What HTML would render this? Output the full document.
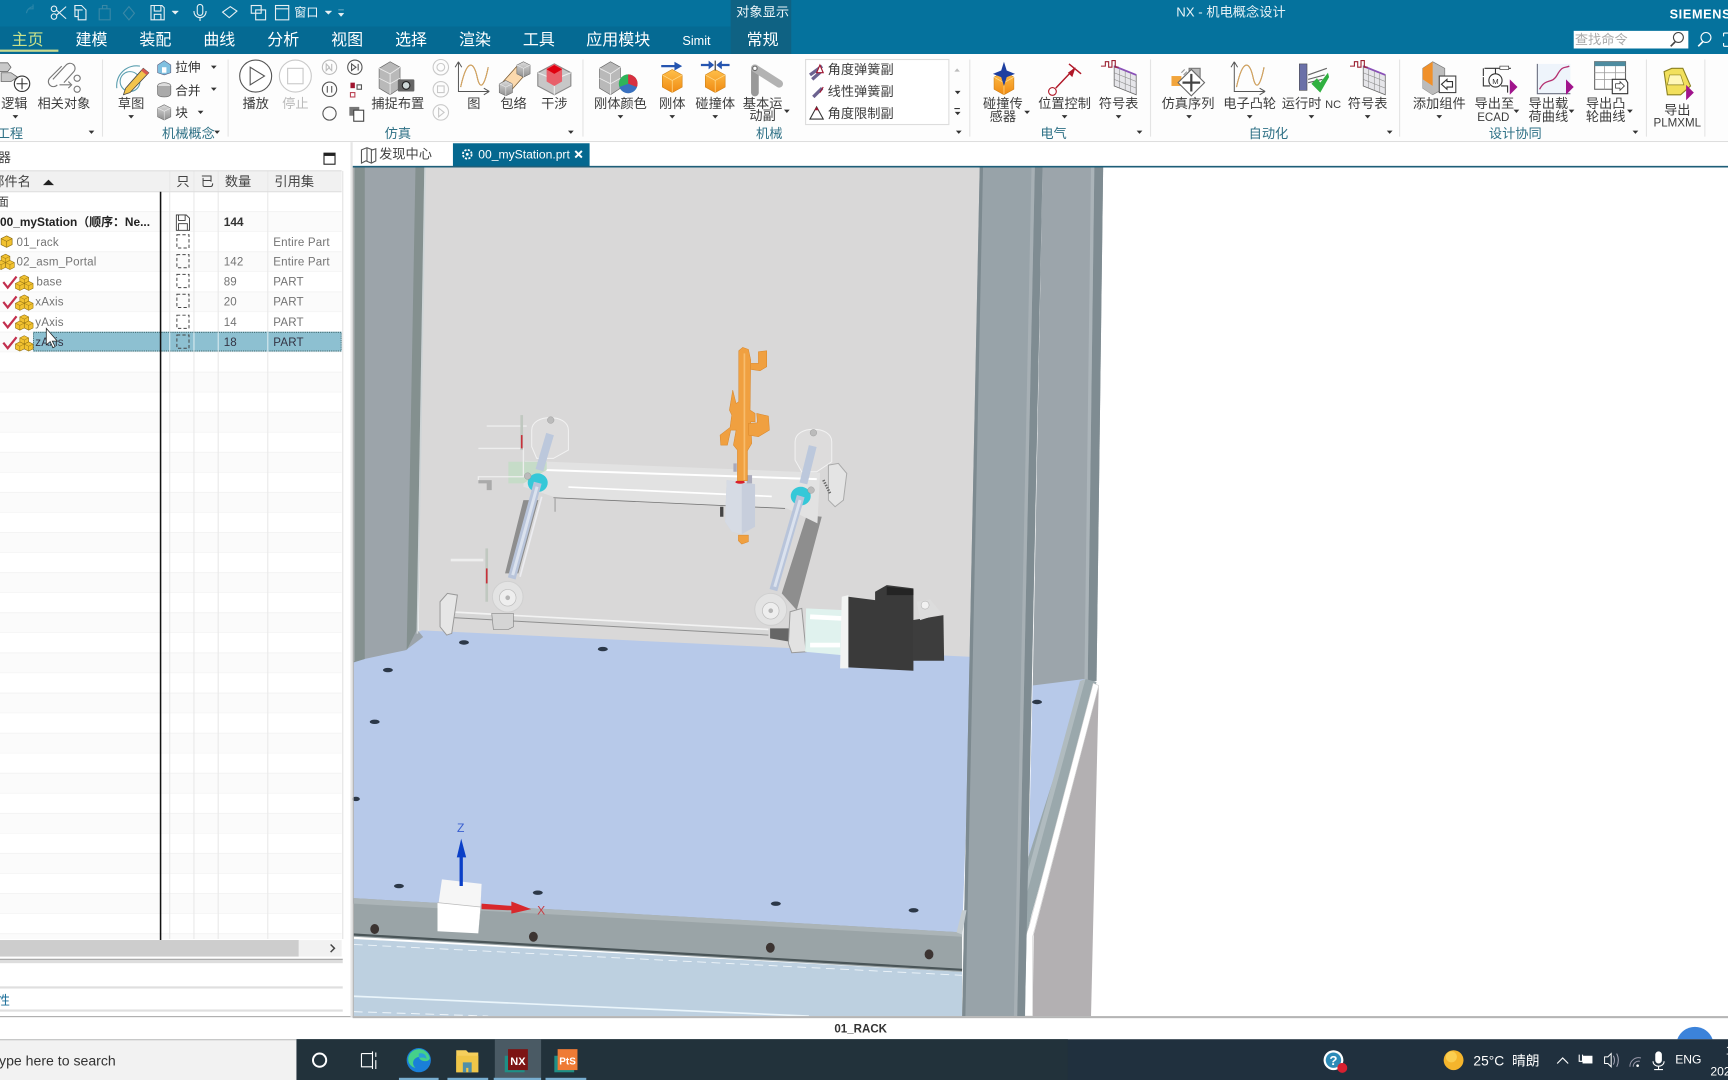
<!DOCTYPE html>
<html lang="zh"><head><meta charset="utf-8"><title>NX - 机电概念设计</title>
<style>
html,body{margin:0;padding:0;background:#fff;width:1728px;height:1080px;overflow:hidden}
svg{display:block;position:absolute;left:0;top:0}
text{font-family:"Liberation Sans","Noto Sans CJK SC",sans-serif}
.l{font-size:12px;fill:#3c3c3c;text-anchor:middle}
.g{font-size:12px;fill:#2f7186;text-anchor:middle}
.t{font-size:14.5px;fill:#fff;text-anchor:middle}
.r{font-size:10.5px;fill:#747474;letter-spacing:.15px}
.h{font-size:12px;fill:#444}
.s{font-size:11.5px;fill:#333}
</style></head><body>
<svg width="1728" height="1080" viewBox="0 0 1568 980" xmlns="http://www.w3.org/2000/svg">
<defs>
<pattern id="rows" x="0" y="174" width="310" height="36.4" patternUnits="userSpaceOnUse"><rect width="310" height="18.2" fill="#fff"/><rect y="18.2" width="310" height="18.2" fill="#fbfbfb"/><path d="M0 18.1H310M0 36.3H310" stroke="#f0f0f0" stroke-width=".6"/></pattern>
<linearGradient id="og" x1="0" y1="0" x2="0" y2="1"><stop offset="0" stop-color="#ffc04a"/><stop offset="1" stop-color="#f08a12"/></linearGradient>
<linearGradient id="gr" x1="0" y1="0" x2="0" y2="1"><stop offset="0" stop-color="#dcdcdc"/><stop offset="1" stop-color="#8d8d8d"/></linearGradient>
<g id="cb"><path d="M0-10 9-5V6L0 11-9 6V-5Z" fill="url(#og)" stroke="#c97a10" stroke-width=".5"/><path d="M-9-5 0 0 9-5M0 0V11" fill="none" stroke="#ffd98a" stroke-width=".7"/></g>
<g id="gc"><path d="M0-7 6-4V4L0 7-6 4V-4Z" fill="url(#gr)" stroke="#666" stroke-width=".5"/><path d="M-6-4 0-1 6-4M0-1V7" fill="none" stroke="#eee" stroke-width=".5"/></g>
<g id="ys"><path d="M0-5 5-2.5V3L0 5.5-5 3V-2.5Z" fill="#f2c230" stroke="#8a6a10" stroke-width=".6"/><path d="M-5-2.5 0 0 5-2.5M0 0V5.5" fill="none" stroke="#8a6a10" stroke-width=".5"/></g>
<g id="ym"><use href="#ys" x="0" y="-3" transform="scale(.8)"/><use href="#ys" x="-5" y="4" transform="scale(.8)"/><use href="#ys" x="5" y="4" transform="scale(.8)"/></g>
<path id="ck" d="M-6 0-2 5 6-5" fill="none" stroke="#c22f4e" stroke-width="2"/>
<g id="bx"><rect x="-5.5" y="-6" width="11" height="12" fill="none" stroke="#444" stroke-width=".9" stroke-dasharray="3 2"/></g>
<path id="tr" d="M-2.6-1.5H2.6L0 1.5Z" fill="#333"/>
<g id="gc2"><path d="M-14-9-4-15 5-10V9L-4 15-14 9Z" fill="#b9b9b9" stroke="#666" stroke-width=".6"/><path d="M-14-9-4-4 5-10M-4-4V15M-14 0-4 5 5 0" fill="none" stroke="#ececec" stroke-width=".8"/></g>
<g id="grid"><path d="M-4-10 16-2V16L-4 8Z" fill="#e6e6ea" stroke="#666" stroke-width=".7"/><path d="M-4-10 16-2" stroke="#8a50b8" stroke-width="1.6"/><path d="M-4-4 16 4M-4 2 16 10M1-8V10M6-6V12M11-4V14" stroke="#888" stroke-width=".5"/><path d="M-16-10h4v-4h3v5h3v-6h3v6h3" fill="none" stroke="#9b2030" stroke-width="1"/></g>
<path id="crv" d="M-14-14V13H14M-14-14-17-9M-14-14-11-9M14 13 9 10M14 13 9 16M-12 9C-6-18 0-14 3 0S10 6 13-9" fill="none" stroke="#555" stroke-width=".9"/>
<path id="pu" d="M0-7 7 0 0 7Z" fill="#a0148c"/>
</defs>

<!-- title bar + tabs -->
<rect width="1568" height="49" fill="#05729d"/>
<rect y="24" width="663" height="25" fill="#056a93"/>
<rect x="663" width="55" height="49" fill="#0f6283"/>
<text x="692" y="15" font-size="12" fill="#eef6f9" text-anchor="middle">对象显示</text>
<text x="1117" y="15" font-size="12" fill="#e8f2f6" text-anchor="middle">NX - 机电概念设计</text>
<text x="1515" y="17" font-size="11.5" font-weight="bold" fill="#fff" letter-spacing=".6">SIEMENS</text>
<g fill="none" stroke="#e8f0f3" stroke-width="1">
<path d="M30 6a7 7 0 0 0-6 6M30 4v4h-4" stroke="#2a85a8"/>
<circle cx="49" cy="15" r="2.5"/><circle cx="49" cy="8" r="2.5"/><path d="M51 14 60 6M51 9 60 17"/>
<path d="M68 5h6l4 4v9h-7V9h-3zM71 9h4"/><path d="M68 5v10h3"/>
<path d="M90 8h10v10H90zM93 8V5h4v3" stroke="#3a88a6"/><path d="M112 12l5-6 5 6-5 6z" stroke="#3a88a6"/>
<path d="M137 5h10l2 2v11h-12zM140 5v5h6V5M140 18v-5h6v5"/>
<rect x="179" y="4" width="5" height="10" rx="2.5"/><path d="M176 10c0 8 11 8 11 0M181.500 16v3"/>
<path d="M202 11l7-5 6 4-7 6z"/>
<rect x="228" y="5" width="9" height="7"/><rect x="232" y="9" width="9" height="9"/>
<rect x="250" y="5" width="12" height="13"/><path d="M250 8h12"/>
</g>
<text x="267" y="15" font-size="11" fill="#f2f7f9">窗口</text>
<path d="M156 10h6l-3 3zM295 10h6l-3 3zM307 12h5l-2.500 3zM307 9h5" fill="#e8f0f3" stroke="#e8f0f3" stroke-width=".4"/>
<text x="25" y="41" class="t" style="fill:#cbe38a">主页</text>
<rect y="45" width="53" height="2" fill="#c9d98f"/>
<text class="t" x="83" y="41">建模</text><text class="t" x="141" y="41">装配</text><text class="t" x="199" y="41">曲线</text><text class="t" x="257" y="41">分析</text><text class="t" x="315" y="41">视图</text><text class="t" x="373" y="41">选择</text><text class="t" x="431" y="41">渲染</text><text class="t" x="489" y="41">工具</text><text class="t" x="561" y="41">应用模块</text><text class="t" x="632" y="41" style="font-size:11.5px">Simit</text><text class="t" x="692" y="41">常规</text>
<rect x="1428" y="28" width="104" height="16" fill="#fff"/>
<text x="1429" y="40" font-size="12" fill="#aaa">查找命令</text>
<g fill="none"><circle cx="1523" cy="34" r="4.500" stroke="#444"/><path d="M1520 38 1516 42" stroke="#444" stroke-width="1.500"/><circle cx="1548" cy="34" r="4.500" stroke="#fff"/><path d="M1545 38 1541 42" stroke="#fff" stroke-width="1.500"/><path d="M1564 30h4M1564 30v3M1564 42h4M1564 42v-3" stroke="#fff"/></g>

<!-- ribbon -->
<rect y="49" width="1568" height="79" fill="#fdfdfd"/>
<rect y="128" width="1568" height="1" fill="#dcdcdc"/>
<path d="M93 54V124M207 54V124M529 54V124M880 54V124M1044 54V124M1270 54V124M1494 54V124M1547 54V124" stroke="#e4e4e4"/>

<!-- group 1 -->
<g fill="#c9c9c9" stroke="#666" stroke-width=".7"><path d="M-2 57h9l3 4-3 4H-2zM1 66h9l6 4-6 4H1z"/></g>
<circle cx="20" cy="76" r="7" fill="#fff" stroke="#333"/><path d="M15 76h10M20 71v10" stroke="#333"/>
<text x="13" y="98" class="l">逻辑</text><use href="#tr" x="14" y="106"/>
<g fill="none" stroke="#777" stroke-width="1"><path d="M48 72 60 59a4.500 4.500 0 0 1 7 6L58 75"/><path d="M56 60 45 71a4.500 4.500 0 0 0 7 6"/><path d="M54 77h10M62 74l3 3-3 3"/><circle cx="70" cy="71" r="2.800"/><circle cx="70" cy="81" r="2.800"/></g>
<text x="58" y="98" class="l">相关对象</text>
<text x="9" y="125" class="g">工程</text><use href="#tr" x="83" y="120"/>
<!-- group 2 -->
<path d="M106 80a18 18 0 0 1 21-20" fill="none" stroke="#5b9fb0"/><circle cx="118" cy="74" r="9" fill="none" stroke="#5b9fb0"/>
<path d="M130 62l5 4-17 18-6 2 2-6z" fill="#f2c44c" stroke="#444" stroke-width=".7"/><path d="M130 62l5 4-2 2-5-4z" fill="#d85a50"/>
<text x="119" y="98" class="l">草图</text><use href="#tr" x="119" y="106"/>
<g transform="translate(149,61)"><path d="M0-6 6-2V5L0 7-6 5V-2Z" fill="#7fc0e0" stroke="#557" stroke-width=".5"/><rect x="-2" y="0" width="4" height="5" fill="#fff"/></g>
<g transform="translate(149,81)"><ellipse cy="-3" rx="6" ry="3" fill="#ddd" stroke="#666" stroke-width=".6"/><path d="M-6-3V4c0 4 12 4 12 0V-3" fill="#aaa" stroke="#666" stroke-width=".6"/></g>
<use href="#gc" x="149" y="102"/>
<text x="159" y="65" class="s">拉伸</text><text x="159" y="86" class="s">合并</text><text x="159" y="106" class="s">块</text>
<use href="#tr" x="194" y="61"/><use href="#tr" x="194" y="81"/><use href="#tr" x="182" y="102"/>
<text x="171" y="125" class="g">机械概念</text><use href="#tr" x="197" y="120"/>
<!-- group 3 -->
<circle cx="232" cy="69" r="14.500" fill="#fff" stroke="#555"/><path d="M227 61 240 69 227 77Z" fill="none" stroke="#555"/>
<circle cx="268" cy="69" r="14.500" fill="#fff" stroke="#c9c9c9"/><rect x="261" y="62" width="14" height="14" fill="none" stroke="#c9c9c9"/>
<text x="232" y="98" class="l">播放</text><text x="268" y="98" class="l" style="fill:#bbb">停止</text>
<g fill="none" stroke="#555"><circle cx="299" cy="61" r="6.500" stroke="#bbb"/><circle cx="322" cy="61" r="6.500"/><circle cx="299" cy="81" r="6.500"/><circle cx="299" cy="103" r="6"/><path d="M296 58v6l3-3zM301 58v6l-3-3" stroke="#bbb"/><path d="M319 58l4 3-4 3zM325 58v6"/><path d="M297 78v6M301 78v6"/></g>
<rect x="318" y="75" width="4" height="5" fill="#a01530"/><rect x="324" y="77" width="4" height="4" fill="none" stroke="#555"/><rect x="318" y="84" width="4" height="4" fill="none" stroke="#b45"/>
<rect x="317" y="97" width="9" height="8" fill="#777"/><rect x="321" y="100" width="9" height="10" fill="#fff" stroke="#444"/>
<use href="#gc2" x="358" y="71"/><rect x="361" y="72" width="15" height="11" rx="1" fill="#666"/><circle cx="368.500" cy="77.500" r="3.500" fill="#cfd8d8" stroke="#222"/>
<text x="361" y="98" class="l">捕捉布置</text>
<g fill="none" stroke="#c9c9c9"><circle cx="400" cy="61" r="7"/><circle cx="400" cy="61" r="3.500"/><circle cx="400" cy="81" r="7"/><rect x="397" y="78" width="6" height="6"/><circle cx="400" cy="102" r="7"/><path d="M398 98l5 4-5 4z"/></g>
<use href="#crv" x="430" y="70"/><path d="M418 79C424 52 430 56 433 70S440 76 443 61" fill="none" stroke="#d8a55c"/>
<text x="430" y="98" class="l">图</text>
<g stroke="#7a5a30" stroke-width=".7"><path d="M470 59 479 65 462 84 453 78Z" fill="#fbd9ad"/><use href="#gc" x="475" y="63"/><use href="#gc" x="459" y="80"/></g>
<text x="466" y="98" class="l">包络</text>
<path d="M503 58 518 66V78L503 86 488 78V66Z" fill="#c7c7c7" stroke="#888"/><path d="M503 72V86 M488 66 503 72 518 66" stroke="#eee" fill="none"/><path d="M503 58l7 4v12l-7 4-7-4V62Z" fill="#e8606a"/><path d="M503 59 510 63 503 67 496 63Z" fill="#e00010"/>
<text x="503" y="98" class="l">干涉</text>
<text x="361" y="125" class="g">仿真</text><use href="#tr" x="518" y="120"/>
<!-- group 4 -->
<use href="#gc2" x="558" y="71"/><circle cx="570" cy="76" r="8.500" fill="#2fb35a"/><path d="M570 76V67.500A8.500 8.500 0 0 1 578 79Z" fill="#d83040"/><path d="M570 76 578 79A8.500 8.500 0 0 1 562 79Z" fill="#3a70c0"/>
<text x="563" y="98" class="l">刚体颜色</text><use href="#tr" x="563" y="106"/>
<use href="#cb" x="610" y="73"/><path d="M600 59h12v-3l7 4-7 4v-3h-12z" fill="#2555b0"/>
<text x="610" y="98" class="l">刚体</text><use href="#tr" x="610" y="106"/>
<use href="#cb" x="649" y="73"/><path d="M636 58h7v-3l5 4-5 4v-3h-7zM662 58h-7v-3l-5 4 5 4v-3h7z" fill="#2555b0"/><path d="M649 55v9" stroke="#333"/>
<text x="649" y="98" class="l">碰撞体</text><use href="#tr" x="649" y="106"/>
<path d="M685 62V84" stroke="#999" stroke-width="7" stroke-linecap="round"/><path d="M685 62 707 76" stroke="#b3b3b3" stroke-width="7" stroke-linecap="round"/><circle cx="685" cy="62" r="2" fill="#fff" stroke="#666"/>
<text x="692" y="98" class="l">基本运</text><text x="692" y="109" class="l">动副</text><use href="#tr" x="714" y="101"/>
<text x="698" y="125" class="g">机械</text>
<rect x="731" y="54" width="130" height="59" fill="#fff" stroke="#ddd"/>
<g font-size="12" fill="#3c3c3c"><text x="751" y="67">角度弹簧副</text><text x="751" y="87">线性弹簧副</text><text x="751" y="107">角度限制副</text></g>
<path d="M735 68 746 60M737 72l9-8M738 88l8-8" stroke="#6c6390" stroke-width="3"/><path d="M741 66l3-7 3 7z" fill="#fff" stroke="#a01530"/><path d="M744 84l3-5" stroke="#a01530"/>
<path d="M735 108 741 97 747 108Z" fill="none" stroke="#333"/><path d="M739 100l2-3 2 3z" fill="#a01530"/>
<path d="M866 65h5l-2.500-3z" fill="#bbb"/><use href="#tr" x="869" y="84"/><use href="#tr" x="869" y="103"/><path d="M866 98.500h5" stroke="#333"/><use href="#tr" x="870" y="120"/>
<!-- group 5 -->
<use href="#cb" x="911" y="75"/><path d="M911 56l2.500 8 7.500 3-7.500 3-2.500 8-2.500-8-7.500-3 7.500-3z" fill="#1d3fa0"/>
<text x="910" y="98" class="l">碰撞传</text><text x="910" y="110" class="l">感器</text><use href="#tr" x="932" y="102"/>
<path d="M958 80 975 62M970 58l11 9" stroke="#b01828" stroke-width="1.300"/><path d="M969 66 976 61 973 70Z" fill="#b01828"/><circle cx="955" cy="83" r="3.500" fill="#fff" stroke="#b01828"/>
<text x="966" y="98" class="l">位置控制</text><use href="#tr" x="966" y="106"/>
<use href="#grid" x="1015" y="70"/>
<text x="1015" y="98" class="l">符号表</text><use href="#tr" x="1015" y="106"/>
<text x="956" y="125" class="g">电气</text><use href="#tr" x="1034" y="120"/>
<!-- group 6 -->
<rect x="1063" y="69" width="9" height="9" fill="#f2a53c"/><rect x="1079" y="62" width="10" height="10" fill="#bbb" stroke="#777"/><path d="M1072 66l3-3M1074 68l3-3" stroke="#999"/>
<path d="M1081 63 1093 75 1081 87 1069 75Z" fill="#fff" stroke="#666"/><path d="M1081 67V83M1073 75H1089" stroke="#444" stroke-width="2"/>
<text x="1078" y="98" class="l">仿真序列</text><use href="#tr" x="1079" y="106"/>
<use href="#crv" x="1134" y="70"/><path d="M1122 79C1128 52 1134 56 1137 70S1144 76 1147 61" fill="none" stroke="#d8a55c"/>
<text x="1134" y="98" class="l">电子凸轮</text><use href="#tr" x="1134" y="106"/>
<rect x="1179" y="58" width="7" height="24" fill="#6a70a8" stroke="#444" stroke-width=".5"/><path d="M1187 68 1204 62M1187 72 1202 68M1187 75 1200 72" stroke="#666" fill="none"/>
<path d="M1190 76 1195 71 1198 75 1205 66 1206 70 1198 84Z" fill="#30b040"/>
<text x="1190" y="98" class="l">运行时 <tspan font-size="10">NC</tspan></text><use href="#tr" x="1190" y="106"/>
<use href="#grid" x="1241" y="70"/>
<text x="1241" y="98" class="l">符号表</text><use href="#tr" x="1241" y="106"/>
<text x="1151" y="125" class="g">自动化</text><use href="#tr" x="1261" y="120"/>
<!-- group 7 -->
<path d="M1300 56 1311 62V80L1300 86 1291 80V62Z" fill="#bdbdbd" stroke="#777" stroke-width=".6"/><path d="M1300 56 1291 62V72L1300 78V67Z" fill="#f0902a"/><path d="M1291 72 1300 78V86L1291 80Z" fill="#bbb"/>
<rect x="1306" y="69" width="15" height="15" fill="#fff" stroke="#444"/><path d="M1318 74h-5v-2l-5 4.500 5 4.500v-2h5z" fill="#fff" stroke="#333"/>
<text x="1306" y="98" class="l">添加组件</text><use href="#tr" x="1306" y="106"/>
<circle cx="1357" cy="73" r="6" fill="#fff" stroke="#333"/><text x="1357" y="76" font-size="7" text-anchor="middle" fill="#333">M</text><path d="M1346 62v7M1347 62h24M1357 62v5M1346 70v8h6M1362 78h6v6" stroke="#333" fill="none"/><rect x="1361" y="60" width="8" height="3" fill="#fff" stroke="#333" stroke-width=".6"/>
<use href="#pu" x="1370" y="79"/>
<text x="1356" y="98" class="l">导出至</text><text x="1355" y="110" class="l" style="font-size:10.500px">ECAD</text><use href="#tr" x="1376" y="101"/>
<rect x="1395" y="58" width="30" height="27" fill="#eef4fb"/><path d="M1395 58V85H1425" fill="none" stroke="#6a6f80"/><path d="M1397 81C1403 70 1408 77 1413 68S1420 62 1424 60" fill="none" stroke="#b43070" stroke-width="1.200"/><use href="#pu" x="1421" y="79"/>
<text x="1405" y="98" class="l">导出载</text><text x="1405" y="110" class="l">荷曲线</text><use href="#tr" x="1426" y="101"/>
<rect x="1447" y="56" width="28" height="25" fill="#fff" stroke="#666"/><rect x="1447" y="56" width="28" height="4" fill="#4e8ca0"/><path d="M1447 66H1475M1447 72H1475M1456 60V81M1466 60V81" stroke="#999" stroke-width=".7"/>
<path d="M1463 72h12l2 3v10h-14z" fill="#fff" stroke="#333"/><path d="M1466 76h4v-2l4 4-4 4v-2h-4z" fill="#fff" stroke="#333" stroke-width=".7"/>
<text x="1457" y="98" class="l">导出凸</text><text x="1457" y="110" class="l">轮曲线</text><use href="#tr" x="1479" y="101"/>
<text x="1375" y="125" class="g">设计协同</text><use href="#tr" x="1484" y="120"/>
<path d="M1510 65 1517 62H1527L1534 78 1525 86H1513Z" fill="#f2e05c" stroke="#8a8020"/><path d="M1515 68h10l3 9h-15z" fill="#fff7b8" stroke="#8a8020" stroke-width=".6"/>
<use href="#pu" x="1530" y="84"/>
<text x="1522" y="104" class="l">导出</text><text x="1522" y="115" class="l" style="font-size:10.500px">PLMXML</text>

<!-- doc tabs -->
<rect y="129" width="1568" height="22" fill="#fff"/>
<path d="M328 136l5-2 5 2 3-1v11l-4 2-5-2-4 2zM333 134v12M337 136v12" fill="none" stroke="#555"/>
<text x="344" y="144" class="h">发现中心</text>
<rect x="411" y="130" width="124" height="21" fill="#05688f"/>
<circle cx="424" cy="140" r="4" fill="none" stroke="#fff" stroke-width="1.600" stroke-dasharray="2 1.200"/><circle cx="424" cy="140" r="1.300" fill="#fff"/>
<text x="434" y="144" font-size="11" fill="#fff">00_myStation.prt</text>
<path d="M522 137l6 6M528 137l-6 6" stroke="#fff" stroke-width="1.800"/>
<rect x="320" y="150.500" width="1248" height="1.500" fill="#1e5e78"/>

<!-- left panel -->
<text x="-2" y="147" class="h">器</text>
<rect x="294" y="139" width="10" height="10" fill="#fff" stroke="#222"/><rect x="294" y="139" width="10" height="2.500" fill="#222"/>
<rect x="0" y="155" width="310" height="19" fill="#f1f1f1"/>
<rect x="0" y="174" width="310" height="678" fill="url(#rows)"/>
<path d="M154 155V852M176 155V852M198 155V852M243 155V852" stroke="#e9e9e9"/>
<path d="M311 155V852" stroke="#e2e2e2"/>
<path d="M0 155H310" stroke="#ddd"/><path d="M0 174H310" stroke="#ddd"/>
<text x="-8" y="169" class="h">部件名</text><path d="M39 168h10l-5-5z" fill="#222"/>
<text x="160" y="169" class="h">只</text><text x="182" y="169" class="h">已</text><text x="204" y="169" class="h">数量</text><text x="249" y="169" class="h">引用集</text>
<text x="-3" y="187" class="h" style="font-size:11px">面</text>
<text x="0" y="205" font-size="10.800" font-weight="bold" fill="#222">00_myStation（顺序：Ne...</text>
<path d="M160 195h9l3 3v11h-12zM162 195v5h6v-5M162 209v-6h8v6" fill="none" stroke="#333" stroke-width=".8"/>
<text x="203" y="205" font-size="10.800" font-weight="bold" fill="#333">144</text>
<use href="#ys" x="6" y="219"/><text x="15" y="223" class="r">01_rack</text><use href="#bx" x="166" y="219"/><text x="248" y="223" class="r">Entire Part</text>
<g transform="translate(5,237)"><use href="#ym"/></g><text x="15" y="241" class="r">02_asm_Portal</text><use href="#bx" x="166" y="237"/><text x="203" y="241" class="r">142</text><text x="248" y="241" class="r">Entire Part</text>
<use href="#ck" x="9" y="256"/><g transform="translate(22,256)"><use href="#ym"/></g><text x="33" y="259" class="r">base</text><use href="#bx" x="166" y="255"/><text x="203" y="259" class="r">89</text><text x="248" y="259" class="r">PART</text>
<use href="#ck" x="9" y="274"/><g transform="translate(22,274)"><use href="#ym"/></g><text x="32" y="277" class="r">xAxis</text><use href="#bx" x="166" y="273"/><text x="203" y="277" class="r">20</text><text x="248" y="277" class="r">PART</text>
<use href="#ck" x="9" y="292"/><g transform="translate(22,292)"><use href="#ym"/></g><text x="32" y="296" class="r">yAxis</text><use href="#bx" x="166" y="292"/><text x="203" y="296" class="r">14</text><text x="248" y="296" class="r">PART</text>
<rect x="30" y="301" width="280" height="18" fill="#8dc0d1"/><rect x="30.500" y="301.500" width="279" height="17" fill="none" stroke="#244" stroke-width=".6" stroke-dasharray="1 1"/>
<path d="M154 301V319M176 301V319M198 301V319M243 301V319" stroke="#d8eaf0"/>
<use href="#ck" x="9" y="311"/><g transform="translate(22,311)"><use href="#ym"/></g><text x="32" y="314" class="r" style="fill:#334">zAxis</text><use href="#bx" x="166" y="310"/><text x="203" y="314" class="r" style="fill:#334">18</text><text x="248" y="314" class="r" style="fill:#334">PART</text>
<rect x="145" y="174" width="1.400" height="679" fill="#111"/>
<path d="M42 298V313L45.500 310 48 315.500 50 314.500 47.500 309.500H52Z" fill="#fff" stroke="#222" stroke-width=".7"/>
<rect y="853" width="310" height="15" fill="#f1f1f1"/><rect y="853" width="271" height="15" fill="#cdcdcd"/>
<path d="M300 857l3.500 3.500-3.500 3.500" fill="none" stroke="#444" stroke-width="1.300"/>
<rect y="870" width="311" height="1" fill="#999"/><rect y="871" width="311" height="3" fill="#ddd"/>
<rect y="895" width="311" height="2" fill="#dfdfdf"/>
<text x="-3" y="912" font-size="12" fill="#1d6f9a">性</text>
<rect y="916" width="311" height="2" fill="#dfdfdf"/>
<rect y="922" width="320" height="1" fill="#aaa"/>

<!-- viewport -->
<rect x="320" y="152" width="1248" height="770" fill="#fff"/>
<path d="M384 152H891L881 600 380 578Z" fill="#d9d8d8"/>
<path d="M321 592 383 572 882 596 873 850 321 820Z" fill="#b7c9e9"/>
<g fill="#2c3848"><ellipse cx="421" cy="583" rx="4.500" ry="2"/><ellipse cx="547" cy="589" rx="4.500" ry="2"/><ellipse cx="352" cy="608" rx="4.500" ry="2"/><ellipse cx="340" cy="655" rx="4.500" ry="2"/><ellipse cx="323" cy="725" rx="3.500" ry="2"/><ellipse cx="362" cy="804" rx="4.500" ry="2"/><ellipse cx="488" cy="810" rx="4.500" ry="2"/><ellipse cx="704" cy="820" rx="4.500" ry="2"/><ellipse cx="829" cy="826" rx="4.500" ry="2"/></g>

<!-- machine, local coords -->
<g transform="translate(399.3,299.5) scale(.3025)">
<path d="M250 510 195 730 235 730 295 510ZM1100 555 1025 790 1070 840 1145 560Z" fill="#8e8e8e"/>
<path d="M255 392 1140 428 1132 580 1040 535 340 500 250 470Z" fill="#e2e2e2"/>
<path d="M260 418 1130 447" stroke="#fff" stroke-width="6"/><path d="M385 471 995 499" stroke="#fff" stroke-width="5"/>
<path d="M340 503 1035 535" stroke="#777" stroke-width="2.500"/><path d="M345 505V545" stroke="#999" stroke-width="3"/>
<path d="M205 395H320V420L250 460H205Z" fill="#c6dcc8"/>
<g fill="none" stroke="#eee" stroke-width="4"><path d="M115 355H250V440H115V450M140 288H260"/></g><path d="M115 450h40v30h-15v-20h-25z" fill="#aaa"/>
<path d="M245 255V360" stroke="#c0c8c0" stroke-width="8"/><path d="M245 315V355" stroke="#c8303a" stroke-width="5"/>
<path d="M140 655V815" stroke="#c0c8c0" stroke-width="8"/><path d="M140 715V760" stroke="#c8303a" stroke-width="5"/><path d="M32 690H130" stroke="#eee" stroke-width="8"/>
<path d="M275 300C275 250 385 250 385 300V360L340 385H290L275 350Z" fill="#dddcdc" stroke="#f2f2f2" stroke-width="3"/>
<path d="M1065 335C1065 285 1175 285 1175 335V395L1130 425H1085L1065 390Z" fill="#dddcdc" stroke="#f2f2f2" stroke-width="3"/>
<circle cx="332" cy="270" r="10" fill="#bbb" stroke="#888"/><circle cx="1120" cy="308" r="10" fill="#bbb" stroke="#888"/>
<path d="M330 312 298 420" stroke="#bcc8dc" stroke-width="24"/><path d="M1118 348 1090 460" stroke="#bcc8dc" stroke-width="24"/>
<path d="M305 500 240 740" stroke="#ececf0" stroke-width="5"/>
<ellipse cx="293" cy="458" rx="30" ry="28" fill="#35c8d8"/><ellipse cx="1082" cy="498" rx="30" ry="28" fill="#35c8d8"/>
<path d="M293 458 215 745" stroke="#b8c4da" stroke-width="24"/><path d="M1082 498 1000 780" stroke="#b8c4da" stroke-width="24"/><path d="M291 470 218 735M1080 510 1004 770" stroke="#dbe2ee" stroke-width="9"/>
<circle cx="263" cy="438" r="10" fill="#bbb" stroke="#888"/><circle cx="1113" cy="480" r="10" fill="#bbb" stroke="#888"/>
<path d="M1165 405 1195 400 1220 430 1210 510 1185 530 1165 510Z" fill="#e4e4e4" stroke="#aaa" stroke-width="3"/><path d="M1150 450 1170 490" stroke="#666" stroke-width="8" stroke-dasharray="4 4"/>
<!-- bottom shaft -->
<path d="M25 852 985 905" stroke="#d6d6d6" stroke-width="20"/><path d="M25 845 985 898" stroke="#f2f2f2" stroke-width="5"/><path d="M25 862 985 915" stroke="#8f8f8f" stroke-width="3"/>
<path d="M0 815 22 790 52 795 35 910 20 915 0 890Z" fill="#e6e6e6" stroke="#999" stroke-width="3"/>
<path d="M155 850H220V890L205 898H160Z" fill="#d5d5d5" stroke="#888" stroke-width="2"/>
<circle cx="203" cy="800" r="46" fill="#e3e3e3" stroke="#d0d0d0" stroke-width="3"/><circle cx="203" cy="803" r="25" fill="#eeeeee" stroke="#bbb" stroke-width="2"/><circle cx="203" cy="803" r="7" fill="#b5b5b5"/>
<circle cx="992" cy="838" r="48" fill="#e3e3e3" stroke="#d0d0d0" stroke-width="3"/><circle cx="992" cy="842" r="25" fill="#eeeeee" stroke="#bbb" stroke-width="2"/><circle cx="992" cy="842" r="7" fill="#b5b5b5"/>
<path d="M990 895H1050V935L990 925Z" fill="#666"/>
<path d="M1050 845 1085 835 1098 965 1055 968 1045 940Z" fill="#e2e2e2" stroke="#999" stroke-width="3"/>
<path d="M1098 835 1210 840 1205 975 1095 965Z" fill="#e0f2ee"/><path d="M1110 860 1205 865M1110 945H1200" stroke="#fff" stroke-width="14"/>
<path d="M1205 800 1225 795 1225 1015 1200 1015Z" fill="#f2f4f3"/>
<path d="M1225 800 1305 810V785L1340 765 1420 775V820L1420 1022 1225 1012Z" fill="#3a3a3a"/><path d="M1340 770 1420 778V795H1340Z" fill="#242424"/>
<path d="M1418 870 1510 855 1512 992 1418 992Z" fill="#3d3d3d"/>
<path d="M1430 815 1470 808 1505 850 1440 870Z" fill="#dcdcdc"/><circle cx="1455" cy="825" r="12" fill="#f2f2f2" stroke="#888"/>
<!-- head -->
<path d="M860 450 945 462V590L905 612 875 605 855 575Z" fill="#c7cedc"/><path d="M860 450 905 458 905 612 875 605 855 575Z" fill="#d6dbe4"/>
<path d="M840 530h10v30h-10z" fill="#444"/>
<path d="M880 400h10v25h-10zM920 435h16v25h-16z" fill="#aab"/>
<ellipse cx="900" cy="456" rx="14" ry="5" fill="#d8202c"/>
<g fill="#f0a040" stroke="#d8862a" stroke-width="1.500">
<path d="M896 62 908 52 925 58 932 90 930 240 945 250V275H932L935 340 922 362V452H892V360L880 345 888 300H872L862 345 842 345 840 315 870 292 875 255 868 240 878 180 888 220 896 215Z"/>
<path d="M955 65 980 62 980 110 960 122 932 118 932 100 955 100Z"/>
<path d="M950 250 985 258 988 300 955 320 925 315 925 280 952 278Z"/>
<path d="M895 615H925V635L905 642 895 632Z"/>
</g>
<path d="M913 70V450" stroke="#f8bc6c" stroke-width="5"/>
</g>

<!-- left post -->
<path d="M320 152H386L379 572 384 578 368 590 321 600Z" fill="#9ca4aa"/>
<path d="M321 152H331V598L321 601Z" fill="#84908f"/><path d="M320 152H321.500V600H320Z" fill="#c6ced0"/>
<path d="M377 152H385L378 572 369 590Z" fill="#84908f"/>
<path d="M385 152H386.500L379.500 575H378Z" fill="#ced4d6"/>

<!-- far right -->
<path d="M946 152H1001L995 618 937 628Z" fill="#9ca5ab"/>
<path d="M993 152H1001L995 618 987 618Z" fill="#7f8c92"/><path d="M990 152H993L987 618H984Z" fill="#abb4b9"/>
<path d="M937 622 985 616 933 800Z" fill="#b7c9e9"/>
<ellipse cx="941" cy="637" rx="4.500" ry="2" fill="#2c3848"/>
<path d="M985 616 995 619 936 830 929 860 926 800Z" fill="#9aa8ac"/><path d="M980 618 985 616 932 810 928 808Z" fill="#b0bbbf"/>
<path d="M997 622 990 922H937L938 848Z" fill="#b3b0b2"/>
<path d="M992 620 997 622 937 850 937 922 930 922 930 852 934 840Z" fill="#fff" stroke="#cfcfcf" stroke-width=".5"/>

<!-- main right post -->
<path d="M889 152H946L930 922H873Z" fill="#98a3a9"/>
<path d="M889 152H892L876 922H873Z" fill="#7d8a90"/>
<path d="M939 152H946L930 922H923Z" fill="#7f8c92"/><path d="M936 152H939L923 922H920Z" fill="#a7b0b5"/>

<!-- lower beam and panel -->
<path d="M321 852 873 882V922H321Z" fill="#bdd0e0"/>
<path d="M321 815 873 846 873 882 321 850Z" fill="#9aa4a7"/>
<path d="M321 815 873 846 873 850 321 820Z" fill="#abb4b7"/>
<path d="M321 848 873 880" stroke="#4a5558" stroke-width="2"/>
<path d="M321 857 873 885" stroke="#eef5fa" stroke-dasharray="8 5" stroke-width=".8"/>
<path d="M321 904 734 922" stroke="#eaf5fb" stroke-width="1.500"/>
<path d="M321 918 443 922" stroke="#eef5fa" stroke-dasharray="8 5" stroke-width=".9"/>
<g fill="#3c3432"><ellipse cx="340" cy="843" rx="4" ry="4.500"/><ellipse cx="484" cy="850" rx="4" ry="4.500"/><ellipse cx="699" cy="860" rx="4" ry="4.500"/><ellipse cx="843" cy="866" rx="4" ry="4.500"/></g>
<path d="M868 846 873 826 877 826 873 848Z" fill="#c4ccd0"/>

<!-- triad -->
<path d="M401 798 437 802 436 823 398 819Z" fill="#f6f6f6"/><path d="M397 819 436 823 434 847 397 845Z" fill="#fff"/><path d="M437 802 436 823 434 847 436 826Z" fill="#ddd"/>
<path d="M397 819 436 823" stroke="#bbb" stroke-width=".7"/>
<path d="M417 804V778H414.500L418.500 761 423 778H420V804Z" fill="#0a3fc8"/>
<text x="418" y="755" font-size="11" fill="#3a5fd0" text-anchor="middle">Z</text>
<path d="M437 820 464 822V818L482 825 464 829V826L437 825Z" fill="#d8282c"/>
<text x="491" y="830" font-size="11" fill="#c83c44" text-anchor="middle">X</text>

<rect x="320" y="152" width="1" height="771" fill="#a8a8a8"/>
<rect x="318" y="129" width="2" height="794" fill="#e6e6e6"/>
<rect x="320" y="922" width="1248" height="2" fill="#b5b5b5"/>

<!-- status bar -->
<rect y="924" width="1568" height="19" fill="#fff"/>
<text x="781" y="937" font-size="10.500" font-weight="bold" fill="#333" text-anchor="middle">01_RACK</text>
<path d="M1522 943a17 17 0 0 1 32 0Z" fill="#3c83da"/>

<!-- taskbar -->
<rect y="943" width="1568" height="37" fill="#20303e"/>
<rect x="269" y="943" width="700" height="37" fill="#22323b"/>
<rect y="943" width="269" height="37" fill="#f2f2f2"/><rect y="943" width="269" height="1" fill="#c9c9c9"/>
<text x="-8" y="967" font-size="12.800" fill="#333">Type here to search</text>
<circle cx="290" cy="962" r="6" fill="none" stroke="#fff" stroke-width="1.800"/>
<path d="M328 956h10v-2M328 968h10v2M328 956v12h10v-12M341 955v4M341 962v8" fill="none" stroke="#fff"/>
<circle cx="380" cy="962" r="11" fill="#1a7fd8"/><path d="M371 958a10 10 0 0 1 19 2c0 4-9 4-10-1-5 1-7 6-3 10-5-1-8-6-6-11Z" fill="#45d08a"/><path d="M380 956c4-1 7 1 7 5-2-2-5-1-7-1z" fill="#2ba0d8"/>
<rect x="449" y="943" width="42" height="37" fill="#4a5a64"/>
<path d="M414 953h9l2 2h9v18h-20Z" fill="#f5cf5c"/><rect x="414" y="958" width="20" height="15" fill="#f0c648"/><rect x="420" y="964" width="8" height="9" fill="#4f8fa8"/><rect x="423" y="969" width="2" height="4" fill="#f0c648"/>
<rect x="458" y="958" width="18" height="15" fill="#1f8f86"/><rect x="461" y="952" width="18" height="19" fill="#7d1414"/>
<text x="470" y="966.500" font-size="10" font-weight="bold" fill="#fff" text-anchor="middle">NX</text>
<rect x="503" y="958" width="18" height="15" fill="#1f8f86"/><rect x="506" y="952" width="18" height="19" fill="#ef7b35"/>
<text x="515" y="966" font-size="9" font-weight="bold" fill="#fff" text-anchor="middle">PtS</text>
<g fill="#78aed0"><rect x="362" y="978" width="36" height="2"/><rect x="406" y="978" width="37" height="2"/><rect x="448" y="978" width="43" height="2"/><rect x="495" y="978" width="37" height="2"/></g>
<circle cx="1210" cy="962" r="9" fill="#fff"/><circle cx="1210" cy="962" r="7" fill="#2d8bb8"/><text x="1210" y="966.500" font-size="12" font-weight="bold" fill="#fff" text-anchor="middle">?</text><circle cx="1218" cy="969" r="4.500" fill="#d82030"/>
<circle cx="1319" cy="962" r="9" fill="#f5b52c"/><circle cx="1317" cy="959" r="5" fill="#fcd55a" opacity=".8"/>
<text x="1337" y="967" font-size="12.500" fill="#fff">25°C</text><text x="1372" y="967" font-size="12.500" fill="#fff">晴朗</text>
<path d="M1413 965l5-5 5 5" fill="none" stroke="#fff"/>
<path d="M1433 957v6h3v-6M1436 961h3" stroke="#fff" fill="none"/><rect x="1436" y="958" width="9" height="7" fill="#fff"/>
<path d="M1456 959h3l3-3v12l-3-3h-3z" fill="none" stroke="#fff" stroke-width=".9"/><path d="M1464 958q2 4 0 8M1467 956q3 6 0 12" fill="none" stroke="#aab" stroke-width=".9"/>
<path d="M1479 968a8 8 0 0 1 10-8M1482 968a5 5 0 0 1 6-5" fill="none" stroke="#99a" stroke-width=".9"/><circle cx="1486" cy="967" r="1.200" fill="#fff"/>
<rect x="1502" y="954" width="6" height="11" rx="3" fill="#fff"/><path d="M1500 963c0 6 10 6 10 0M1505 968v2M1501 970.500h8" fill="none" stroke="#fff"/>
<text x="1532" y="965" font-size="11" fill="#fff" text-anchor="middle">ENG</text>
<text x="1552" y="976" font-size="11" fill="#fff">2021</text>
<text x="1566" y="957" font-size="11" fill="#fff">1</text>
</svg>
</body></html>
